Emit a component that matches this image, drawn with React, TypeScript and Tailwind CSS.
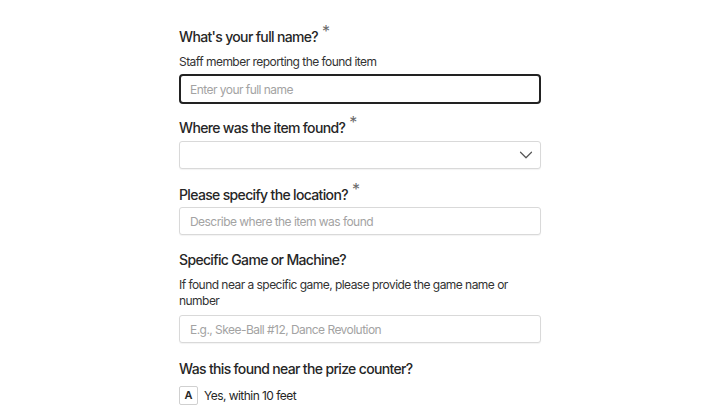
import { ChevronDown } from 'lucide-react';

const Req = () => (
  <span className="relative top-[-5px] ml-[4px] text-[16px] font-normal leading-none text-[#6b6b6b]">*</span>
);

// Reference face is narrower than Inter; tighter tracking keeps line widths
const labelCls = 'block text-[14px] font-medium leading-[22px] tracking-[-0.047em] text-[#262626]';
const descCls = 'text-[12px] leading-[16px] tracking-[-0.045em] text-[#333]';
const inputCls =
  'block w-full h-[28px] rounded-[3px] border border-[#d9d9d9] bg-white px-[10px] text-[12px] tracking-[-0.045em] text-[#222] placeholder:text-[#a3a3a3] shadow-[0_1px_1px_rgba(0,0,0,0.05)] outline-none';

export default function App() {
  return (
    <div
      className="min-h-[405px] w-full bg-white"
      style={{ fontFamily: 'Inter, "Noto Sans", sans-serif' }}
    >
      <div className="mx-auto w-[362px] pt-[26px] text-[#262626]">
        {/* Full name */}
        <div>
          <label className={labelCls}>
            What's your full name?
            <Req />
          </label>
          <p className={`mt-[6px] ${descCls}`}>Staff member reporting the found item</p>
          <input
            className="mt-[4px] block w-full h-[30px] rounded-[4px] border-2 border-[#222] bg-white px-[9px] text-[12px] tracking-[-0.045em] placeholder:text-[#a3a3a3] outline-none"
            placeholder="Enter your full name"
          />
        </div>

        {/* Where */}
        <div className="mt-[13px]">
          <label className={labelCls}>
            Where was the item found?
            <Req />
          </label>
          <div className="mt-[2px] flex h-[28px] items-center justify-end rounded-[3px] border border-[#d9d9d9] bg-white pr-[3px] shadow-[0_1px_1px_rgba(0,0,0,0.05)]">
            <ChevronDown size={22} strokeWidth={1.3} className="text-[#555]" />
          </div>
        </div>

        {/* Location */}
        <div className="mt-[15px]">
          <label className={labelCls}>
            Please specify the location?
            <Req />
          </label>
          <input className={`mt-[1px] ${inputCls}`} placeholder="Describe where the item was found" />
        </div>

        {/* Game */}
        <div className="mt-[14px]">
          <label className={labelCls}>Specific Game or Machine?</label>
          <p className={`mt-[6px] ${descCls}`}>
            If found near a specific game, please provide the game name or number
          </p>
          <input className={`mt-[6px] ${inputCls}`} placeholder="E.g., Skee-Ball #12, Dance Revolution" />
        </div>

        {/* Prize counter */}
        <div className="mt-[15px]">
          <label className={labelCls}>Was this found near the prize counter?</label>
          <div className="mt-[6px] flex items-center gap-[6px]">
            <span className="flex h-[19px] w-[19px] items-center justify-center rounded-[2px] border border-[#d0d0d0] text-[11px] font-semibold">
              A
            </span>
            <span className="text-[12px] tracking-[-0.045em]">Yes, within 10 feet</span>
          </div>
        </div>
      </div>
    </div>
  );
}
